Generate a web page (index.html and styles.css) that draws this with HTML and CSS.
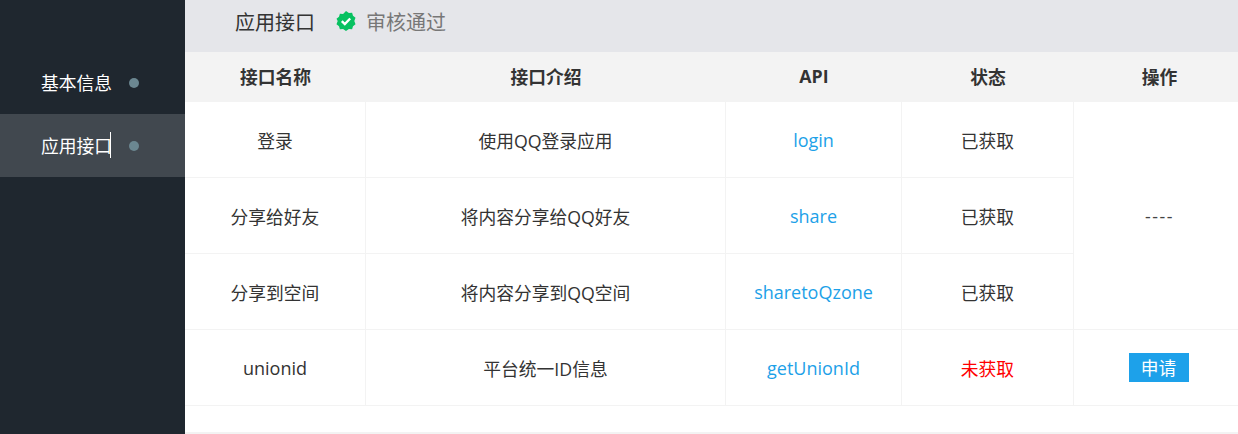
FILE: index.html
```html
<!DOCTYPE html>
<html lang="zh-CN">
<head>
<meta charset="utf-8">
<title>应用接口</title>
<link rel="stylesheet" href="styles.css">
</head>
<body>
<div class="page">
  <aside class="sidebar">
    <div class="nav-item"><span class="nav-label">基本信息</span><i class="dot"></i></div>
    <div class="nav-item active"><span class="nav-label caret">应用接口</span><i class="dot"></i></div>
  </aside>
  <main class="content">
    <header class="topbar">
      <span class="title">应用接口</span>
      <svg class="badge" viewBox="0 0 20 20" width="20" height="20" aria-hidden="true">
        <path fill="#07c160" d="M10 0l2.900 2.100 3.200-.4.900 3.100 2.500 2-1.200 3.200 1.200 3.200-2.500 2-.9 3.100-3.200-.4L10 20l-2.900-2.100-3.200.4-.9-3.100-2.500-2 1.200-3.200L.5 7.800l2.500-2 .9-3.100 3.200.4z"/>
        <path fill="none" stroke="#fff" stroke-width="2.400" d="M5.800 10.200l3 2.900 5.400-5.600"/>
      </svg>
      <span class="status">审核通过</span>
    </header>
    <table class="api-table">
      <colgroup>
        <col class="c1"><col class="c2"><col class="c3"><col class="c4"><col class="c5">
      </colgroup>
      <thead>
        <tr><th>接口名称</th><th>接口介绍</th><th>API</th><th>状态</th><th>操作</th></tr>
      </thead>
      <tbody>
        <tr><td>登录</td><td>使用QQ登录应用</td><td class="api">login</td><td>已获取</td><td class="op dashes" rowspan="3">----</td></tr>
        <tr><td>分享给好友</td><td>将内容分享给QQ好友</td><td class="api">share</td><td>已获取</td></tr>
        <tr><td>分享到空间</td><td>将内容分享到QQ空间</td><td class="api">sharetoQzone</td><td>已获取</td></tr>
        <tr><td class="latin">unionid</td><td>平台统一ID信息</td><td class="api">getUnionId</td><td class="missing">未获取</td><td class="op"><a class="apply">申请</a></td></tr>
      </tbody>
    </table>
    <div class="footer-rule"></div>
  </main>
</div>
</body>
</html>
```
FILE: styles.css
```css
* { box-sizing: border-box; }
html, body { margin: 0; height: 100%; overflow: hidden; background: #fff; }
body { font-family: "Open Sans", "Noto Sans CJK SC", sans-serif; font-size: 18px; color: #333; }
.page { display: flex; height: 434px; }
.sidebar { width: 185px; flex: none; background: #1f272f; padding-top: 52px; }
.nav-item { height: 62px; display: flex; align-items: center; padding: 0 0 0 41px; color: #fff; font-size: 17.750px; }
.nav-item.active { height: 63px; background: #41484f; }
.nav-label { width: 88px; margin-bottom: 2px; }
.caret { position: relative; }
.caret::after { content: ""; position: absolute; left: 69px; top: 0; bottom: 0; width: 1px; background: #fff; }
.dot { width: 10px; height: 10px; border-radius: 50%; background: #6b8791; }
.content { flex: 1; min-width: 0; overflow: hidden; }
.topbar { height: 52px; background: #e5e6ea; display: flex; align-items: center; padding: 0 0 10px 50px; font-size: 20px; }
.title { color: #333; margin-right: 21px; }
.badge { margin-right: 10px; }
.status { color: #777; }
.api-table { width: 1060px; border-collapse: separate; border-spacing: 0; table-layout: fixed; }
.c1 { width: 181px; } .c2 { width: 360px; } .c3 { width: 176px; } .c4 { width: 172px; } .c5 { width: 171px; }
th { height: 50px; background: #f3f3f3; font-size: 17.750px; font-weight: 700; color: #333; padding: 0 0 2px; }
td { height: 76px; text-align: center; padding: 0; border-right: 1px solid #f3f3f3; border-bottom: 1px solid #f3f3f3; font-size: 17.750px; color: #333; font-weight: 400; }
.api { color: #1da1e8; font-size: 18px; }
.latin { font-size: 18px; }
.missing { color: #f00; }
.op { color: #444; border-right: 0; }
.dashes { letter-spacing: 1.600px; }
.apply { display: inline-block; width: 60px; height: 29px; line-height: 30px; margin-right: 2px; background: #1da1ea; color: #fff; }
.footer-rule { height: 2px; margin-top: 26px; background: #f3f3f3; }
```
